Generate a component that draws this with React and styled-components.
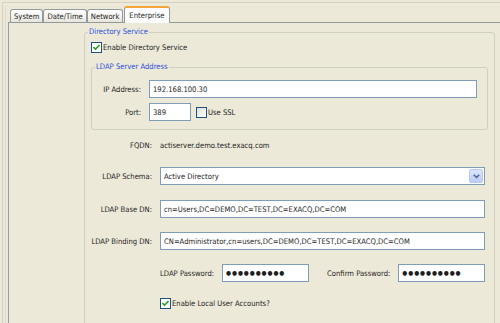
import React from "react";
import styled, { createGlobalStyle } from "styled-components";

const GlobalStyle = createGlobalStyle`
  body {
    margin: 0;
    background: #ece9d8;
  }
`;

const Screen = styled.div`
  width: 500px;
  height: 323px;
  overflow: hidden;
  box-sizing: border-box;
  padding: 2px 0 0 2px;
  background: #ece9d8;
  font-family: "DejaVu Sans Condensed", "DejaVu Sans", sans-serif;
  font-size: 7.6px;
  color: #1e1e1e;
`;

const OuterFrame = styled.div`
  height: 100%;
  box-sizing: border-box;
  border-top: 1px solid #d6d2c1;
  border-left: 1px solid #d6d2c1;
  padding: 3px 0 0 2px;
`;

const InnerFrame = styled.div`
  height: 100%;
  border-left: 1px solid #e0dccb;
  padding-left: 2px;
`;

const TabBar = styled.div`
  display: flex;
  align-items: flex-end;
  height: 17px;
  padding-left: 2px;
  margin-bottom: -1px;
  position: relative;
  z-index: 1;
`;

const Tab = styled.div`
  box-sizing: border-box;
  height: ${(p) => (p.$active ? "17px" : "13px")};
  margin-bottom: ${(p) => (p.$active ? "0" : "1px")};
  margin-left: ${(p) => (p.$active ? "1px" : "0")};
  padding: 0 ${(p) => (p.$active ? "4px" : "3px")};
  display: flex;
  align-items: center;
  border: 1px solid #919b9c;
  border-bottom: none;
  border-top: ${(p) => (p.$active ? "2px solid #f3a33a" : "1px solid #919b9c")};
  border-radius: 3px 3px 0 0;
  background: ${(p) =>
    p.$active ? "#fcfcfe" : "linear-gradient(#ffffff, #f3f2ed 60%, #e6e4dc)"};
  padding-top: ${(p) => (p.$active ? "0" : "1px")};
  white-space: nowrap;
`;

const Panel = styled.div`
  height: 100%;
  border-top: 1px solid #919b9c;
  border-left: 1px solid #8d9fb8;
  padding-left: 75px;
`;

const Group = styled.fieldset`
  margin: ${(p) => (p.$inner ? "9px 6px 0 6px" : "4px 0 0 0")};
  padding: ${(p) => (p.$inner ? "8px 10px 8px 0" : "0 0 0 0")};
  border: 1px solid #d0d0bf;
  border-radius: 3px;
  height: ${(p) => (p.$inner ? "auto" : "400px")};
  width: ${(p) => (p.$inner ? "auto" : "410px")};
  box-sizing: border-box;
`;

const Legend = styled.legend`
  color: #2b4fd8;
  padding: 0 1px;
  margin-left: 3px;
  line-height: 10px;
`;

const CheckRow = styled.label`
  display: flex;
  align-items: center;
  gap: 1px;
  margin: ${(p) => p.$margin || "0"};
`;

const Box = styled.span`
  width: 11px;
  height: 11px;
  box-sizing: border-box;
  border: 1px solid #1c5180;
  background: ${(p) => (p.$checked ? "#ffffff" : "linear-gradient(135deg, #dcdcd7, #ffffff)")};
  display: inline-flex;
  align-items: center;
  justify-content: center;
  flex-shrink: 0;
`;

const Row = styled.div`
  display: flex;
  align-items: center;
  height: 18px;
  margin-top: ${(p) => p.$mt || 0}px;
`;

const Label = styled.span`
  width: ${(p) => p.$w}px;
  text-align: right;
  flex-shrink: 0;
  margin-right: 8px;
  white-space: nowrap;
`;

const Field = styled.div`
  box-sizing: border-box;
  width: ${(p) => p.$w}px;
  height: 18px;
  border: 1px solid #7f9db9;
  background: #ffffff;
  display: flex;
  align-items: center;
  padding-left: 3px;
  white-space: nowrap;
  overflow: hidden;
  letter-spacing: ${(p) => (p.$dots ? "0.9px" : "normal")};
  font-size: ${(p) => (p.$dots ? "6.4px" : "inherit")};
`;

const SelectField = styled(Field)`
  padding-right: 1px;
  justify-content: space-between;
`;

const DropButton = styled.span`
  width: 14px;
  height: 14px;
  box-sizing: border-box;
  border: 1px solid #b9cbf3;
  border-radius: 2px;
  background: linear-gradient(#dbe5fd, #b9cbf7);
  display: flex;
  align-items: center;
  justify-content: center;
`;

const Value = styled.span`
  white-space: nowrap;
`;

const Inline = styled.div`
  display: flex;
  align-items: center;
`;

const PassLabel = styled.span`
  margin: 0 8px 0 ${(p) => p.$ml || 0}px;
  white-space: nowrap;
`;

const Check = () => (
  <svg width="7" height="7" viewBox="0 0 7 7">
    <path d="M0.5 3 L2.5 5.2 L6.5 1" fill="none" stroke="#21a121" strokeWidth="1.6" />
  </svg>
);

const Checkbox = ({ checked }) => <Box $checked={checked}>{checked && <Check />}</Box>;

export default function App() {
  return (
    <>
      <GlobalStyle />
      <Screen>
        <OuterFrame>
          <InnerFrame>
            <TabBar>
              <Tab>System</Tab>
              <Tab>Date/Time</Tab>
              <Tab>Network</Tab>
              <Tab $active>Enterprise</Tab>
            </TabBar>
            <Panel>
              <Group>
                <Legend>Directory Service</Legend>
                <CheckRow $margin="5px 0 0 6px">
                  <Checkbox checked />
                  Enable Directory Service
                </CheckRow>
                <Group $inner>
                  <Legend>LDAP Server Address</Legend>
                  <Row>
                    <Label $w={49}>IP Address:</Label>
                    <Field $w={328}>192.168.100.30</Field>
                  </Row>
                  <Row $mt={5}>
                    <Label $w={49}>Port:</Label>
                    <Field $w={42}>389</Field>
                    <CheckRow $margin="0 0 0 5px">
                      <Checkbox />
                      Use SSL
                    </CheckRow>
                  </Row>
                </Group>
                <Row $mt={6}>
                  <Label $w={67}>FQDN:</Label>
                  <Value>actiserver.demo.test.exacq.com</Value>
                </Row>
                <Row $mt={13}>
                  <Label $w={67}>LDAP Schema:</Label>
                  <SelectField $w={325}>
                    <Value>Active Directory</Value>
                    <DropButton>
                      <svg width="7" height="5" viewBox="0 0 7 5">
                        <path d="M0.8 0.8 L3.5 3.5 L6.2 0.8" fill="none" stroke="#4d6185" strokeWidth="1.5" />
                      </svg>
                    </DropButton>
                  </SelectField>
                </Row>
                <Row $mt={15}>
                  <Label $w={67}>LDAP Base DN:</Label>
                  <Field $w={325}>cn=Users,DC=DEMO,DC=TEST,DC=EXACQ,DC=COM</Field>
                </Row>
                <Row $mt={14}>
                  <Label $w={67}>LDAP Binding DN:</Label>
                  <Field $w={325}>CN=Administrator,cn=users,DC=DEMO,DC=TEST,DC=EXACQ,DC=COM</Field>
                </Row>
                <Row $mt={14}>
                  <Label $w={67} />
                  <Inline>
                    <PassLabel>LDAP Password:</PassLabel>
                    <Field $w={87} $dots>●●●●●●●●●●</Field>
                    <PassLabel $ml={18}>Confirm Password:</PassLabel>
                    <Field $w={87} $dots>●●●●●●●●●●</Field>
                  </Inline>
                </Row>
                <Row $mt={12}>
                  <Label $w={67} />
                  <CheckRow>
                    <Checkbox checked />
                    Enable Local User Accounts?
                  </CheckRow>
                </Row>
              </Group>
            </Panel>
          </InnerFrame>
        </OuterFrame>
      </Screen>
    </>
  );
}
